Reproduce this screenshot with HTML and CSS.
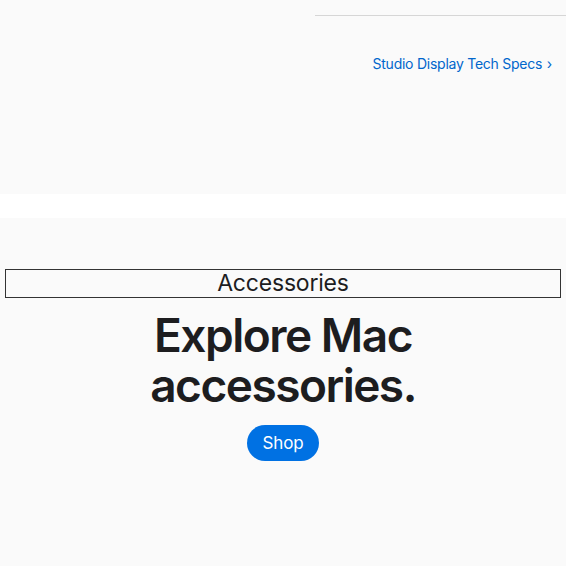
FILE: index.html
```html
<!DOCTYPE html>
<html lang="en">
<head>
<meta charset="utf-8">
<link rel="stylesheet" href="styles.css">
</head>
<body>
<section class="specs">
  <div class="specs-spacer"></div>
  <div class="specs-col">
    <a class="specs-link" href="#">Studio Display Tech Specs <span class="chev">›</span></a>
  </div>
</section>
<section class="accessories">
  <h2 class="eyebrow">Accessories</h2>
  <h3 class="headline">Explore Mac<br>accessories.</h3>
  <a class="shop-btn" href="#">Shop</a>
</section>
</body>
</html>
```
FILE: styles.css
```css
html, body {
  margin: 0;
  padding: 0;
  background: #ffffff;
  font-family: Inter, "Noto Sans", "Liberation Sans", sans-serif;
  color: #1d1d1f;
}
.specs {
  background: #fafafa;
  height: 194px;
  box-sizing: border-box;
  padding-top: 15px;
  display: grid;
  grid-template-columns: 315px 1fr;
}
.specs-col {
  border-top: 1px solid #d6d6d6;
  text-align: right;
  padding-top: 37px;
  padding-right: 14px;
}
.specs-link {
  color: #0066cc;
  text-decoration: none;
  font-size: 14px;
  line-height: 20px;
  letter-spacing: -0.25px;
}
.chev {
  margin-left: 1px;
}
.accessories {
  margin-top: 24px;
  background: #fafafa;
  height: 348px;
  box-sizing: border-box;
  padding-top: 51px;
  display: flex;
  flex-direction: column;
  align-items: center;
}
.eyebrow {
  align-self: stretch;
  margin: 0 5px;
  border: 1px solid #333333;
  font-size: 23px;
  font-weight: 400;
  line-height: 27px;
  text-align: center;
  letter-spacing: -0.2px;
}
.headline {
  margin: 12px 0 0;
  font-size: 46px;
  font-weight: 600;
  line-height: 50px;
  text-align: center;
  letter-spacing: -1.5px;
}
.shop-btn {
  margin-top: 15px;
  width: 72px;
  height: 36px;
  border-radius: 18px;
  background: #0071e3;
  color: #ffffff;
  text-decoration: none;
  font-size: 17px;
  line-height: 36px;
  text-align: center;
  letter-spacing: -0.2px;
}
```
